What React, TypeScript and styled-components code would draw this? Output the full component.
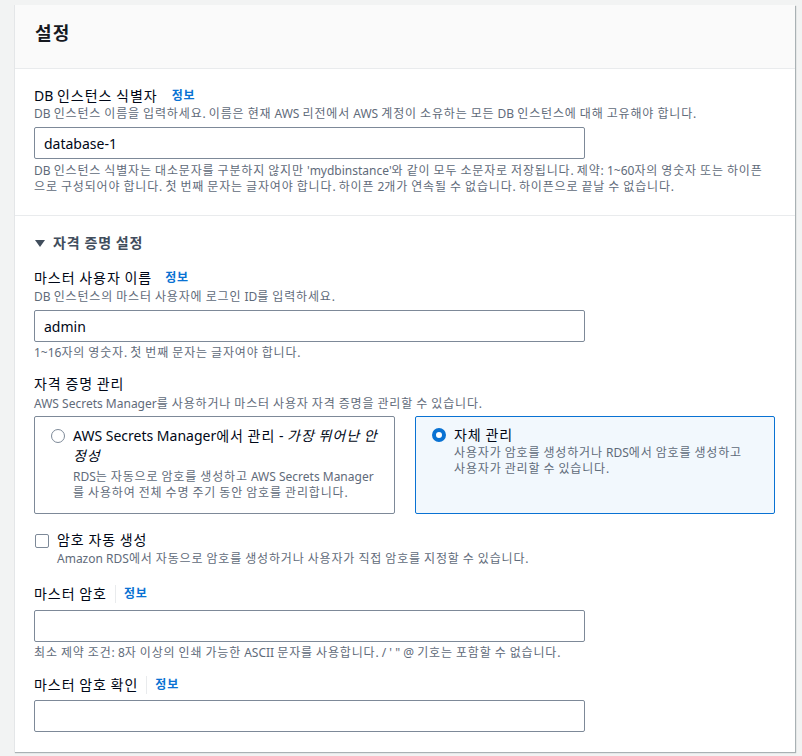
import React from "react";
import styled, { createGlobalStyle } from "styled-components";

const Global = createGlobalStyle`
  html, body { margin: 0; padding: 0; background: #f2f3f3; }
  body { font-family: "Noto Sans", "Noto Sans CJK KR", sans-serif; color: #000716; }
  * { box-sizing: border-box; }
`;

const HangulRun = styled.span`
  letter-spacing: 0.07em;
`;

function T({ children }: { children: string }) {
  const parts = children.split(/([\uAC00-\uD7A3]+)/);
  return (
    <>
      {parts.map((p, i) =>
        /[\uAC00-\uD7A3]/.test(p) ? <HangulRun key={i}>{p}</HangulRun> : <React.Fragment key={i}>{p}</React.Fragment>
      )}
    </>
  );
}

const Page = styled.div`
  padding: 5px 7px 4px 14px;
`;

const Card = styled.div`
  width: 781px;
  height: 747px;
  background: #ffffff;
  border-left: 1px solid #e4e6e8;
  box-shadow: 1px 1px 1px 0 rgba(0, 28, 36, 0.3);
  display: flex;
  flex-direction: column;
`;

const Header = styled.div`
  height: 64px;
  background: #fafafa;
  border-bottom: 1px solid #e9ebed;
  display: flex;
  align-items: center;
  padding: 0 0 7px 20px;
`;

const Title = styled.h2`
  margin: 0;
  font-size: 18px;
  font-weight: 700;
  line-height: 22px;
  color: #16191f;
`;

const Section = styled.div<{ $top: number; $bottom: number; $divider?: boolean }>`
  padding: ${(p) => p.$top}px 20px ${(p) => p.$bottom}px 19px;
  border-bottom: ${(p) => (p.$divider ? "1px solid #e9ebed" : "none")};
  display: flex;
  flex-direction: column;
`;

const LabelRow = styled.div<{ $mt?: number }>`
  display: flex;
  align-items: center;
  height: 20px;
  margin-top: ${(p) => p.$mt ?? 0}px;
`;

const Label = styled.span`
  font-size: 14px;
  line-height: 20px;
  color: #000716;
`;

const Info = styled.a<{ $sep?: boolean; $gap?: number }>`
  font-size: 12px;
  font-weight: 700;
  line-height: 18px;
  color: #0972d3;
  text-decoration: none;
  margin-left: ${(p) => (p.$sep ? 8 : p.$gap ?? 14)}px;
  padding-left: ${(p) => (p.$sep ? 8 : 0)}px;
  border-left: ${(p) => (p.$sep ? "1px solid #e9ebed" : "none")};
`;

const Desc = styled.div<{ $mt?: number; $max?: number }>`
  font-size: 12px;
  line-height: 16px;
  color: #5f6b7a;
  margin-top: ${(p) => p.$mt ?? 0}px;
  max-width: ${(p) => (p.$max ? `${p.$max}px` : "none")};
`;

const Input = styled.input<{ $mt?: number }>`
  display: block;
  width: 551px;
  height: 32px;
  margin-top: ${(p) => p.$mt ?? 5}px;
  border: 1px solid #7d8998;
  border-radius: 2px;
  padding: 0 9px;
  font-family: "Noto Sans", "Noto Sans CJK KR", sans-serif;
  font-size: 14px;
  color: #000716;
  background: #ffffff;
  outline: none;
`;

const Expander = styled.div`
  display: flex;
  align-items: center;
  gap: 8px;
  height: 20px;
  padding-left: 1px;
  font-size: 14px;
  font-weight: 700;
  line-height: 20px;
  color: #414d5c;
`;

const Caret = styled.svg`
  width: 10px;
  height: 7px;
  fill: #414d5c;
`;

const TileGrid = styled.div`
  display: grid;
  grid-template-columns: 361px 360px;
  gap: 20px;
  margin-top: 4px;
`;

const Tile = styled.div<{ $active?: boolean }>`
  height: 98px;
  border: 1px solid ${(p) => (p.$active ? "#0972d3" : "#7d8998")};
  border-radius: 2px;
  background: ${(p) => (p.$active ? "#f2f8fd" : "#ffffff")};
  padding: ${(p) => (p.$active ? "8px 18px 10px 16px" : "9px 16px 10px 16px")};
  display: flex;
  gap: 8px;
  align-items: flex-start;
`;

const Radio = styled.span<{ $checked?: boolean }>`
  flex: none;
  width: 14px;
  height: 14px;
  margin-top: 3px;
  border-radius: 50%;
  background: #ffffff;
  border: ${(p) => (p.$checked ? "4px solid #0972d3" : "1.5px solid #7d8998")};
`;

const TileBody = styled.div`
  display: flex;
  flex-direction: column;
`;

const TileTitle = styled.div`
  font-size: 14px;
  line-height: 20px;
  color: #000716;
  em { font-style: italic; }
`;

const CheckRow = styled.div`
  display: flex;
  align-items: flex-start;
  gap: 8px;
  margin-top: 16px;
  padding-left: 1px;
`;

const Checkbox = styled.span`
  flex: none;
  width: 14px;
  height: 14px;
  margin-top: 4px;
  border: 1.5px solid #7d8998;
  border-radius: 2px;
  background: #ffffff;
`;

const CheckBody = styled.div`
  display: flex;
  flex-direction: column;
`;

export default function App() {
  return (
    <>
      <Global />
      <Page>
        <Card>
          <Header>
            <Title><T>설정</T></Title>
          </Header>
          <Section $top={17} $bottom={20} $divider>
            <LabelRow>
              <Label><T>DB 인스턴스 식별자</T></Label>
              <Info href="#"><T>정보</T></Info>
            </LabelRow>
            <Desc>
              <T>DB 인스턴스 이름을 입력하세요. 이름은 현재 AWS 리전에서 AWS 계정이 소유하는 모든 DB 인스턴스에 대해 고유해야 합니다.</T>
            </Desc>
            <Input defaultValue="database-1" $mt={5} />
            <Desc $mt={4} $max={735}>
              <T>DB 인스턴스 식별자는 대소문자를 구분하지 않지만 'mydbinstance'와 같이 모두 소문자로 저장됩니다. 제약: 1~60자의 영숫자 또는 하이픈으로 구성되어야 합니다. 첫 번째 문자는 글자여야 합니다. 하이픈 2개가 연속될 수 없습니다. 하이픈으로 끝날 수 없습니다.</T>
            </Desc>
          </Section>
          <Section $top={17} $bottom={20}>
            <Expander>
              <Caret viewBox="0 0 10 7">
                <path d="M0 0h10L5 7z" />
              </Caret>
              <span><T>자격 증명 설정</T></span>
            </Expander>
            <LabelRow $mt={15}>
              <Label><T>마스터 사용자 이름</T></Label>
              <Info href="#" $gap={13}><T>정보</T></Info>
            </LabelRow>
            <Desc $mt={1}><T>DB 인스턴스의 마스터 사용자에 로그인 ID를 입력하세요.</T></Desc>
            <Input defaultValue="admin" $mt={5} />
            <Desc $mt={3}><T>1~16자의 영숫자. 첫 번째 문자는 글자여야 합니다.</T></Desc>
            <LabelRow $mt={13}>
              <Label><T>자격 증명 관리</T></Label>
            </LabelRow>
            <Desc $mt={2}><T>AWS Secrets Manager를 사용하거나 마스터 사용자 자격 증명을 관리할 수 있습니다.</T></Desc>
            <TileGrid>
              <Tile>
                <Radio />
                <TileBody>
                  <TileTitle>
                    <T>AWS Secrets Manager에서 관리 - </T>
                    <em><T>가장 뛰어난 안정성</T></em>
                  </TileTitle>
                  <Desc $mt={3}>
                    <T>RDS는 자동으로 암호를 생성하고 AWS Secrets Manager를 사용하여 전체 수명 주기 동안 암호를 관리합니다.</T>
                  </Desc>
                </TileBody>
              </Tile>
              <Tile $active>
                <Radio $checked />
                <TileBody>
                  <TileTitle><T>자체 관리</T></TileTitle>
                  <Desc><T>사용자가 암호를 생성하거나 RDS에서 암호를 생성하고 사용자가 관리할 수 있습니다.</T></Desc>
                </TileBody>
              </Tile>
            </TileGrid>
            <CheckRow>
              <Checkbox />
              <CheckBody>
                <Label><T>암호 자동 생성</T></Label>
                <Desc $mt={1}><T>Amazon RDS에서 자동으로 암호를 생성하거나 사용자가 직접 암호를 지정할 수 있습니다.</T></Desc>
              </CheckBody>
            </CheckRow>
            <LabelRow $mt={17}>
              <Label><T>마스터 암호</T></Label>
              <Info href="#" $sep><T>정보</T></Info>
            </LabelRow>
            <Input type="password" $mt={6} />
            <Desc $mt={3}><T>최소 제약 조건: 8자 이상의 인쇄 가능한 ASCII 문자를 사용합니다. / ' " @ 기호는 포함할 수 없습니다.</T></Desc>
            <LabelRow $mt={14}>
              <Label><T>마스터 암호 확인</T></Label>
              <Info href="#" $sep><T>정보</T></Info>
            </LabelRow>
            <Input type="password" $mt={5} />
          </Section>
        </Card>
      </Page>
    </>
  );
}
